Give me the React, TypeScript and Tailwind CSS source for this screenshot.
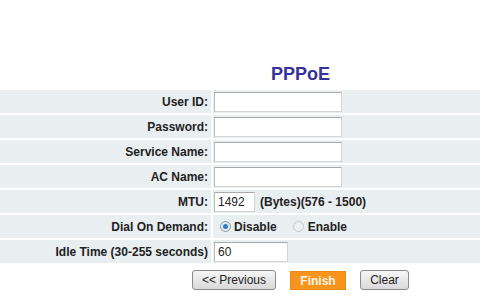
import React from "react";

const font = { fontFamily: '"Liberation Sans", Arial, sans-serif' };

function Row({ label, children }: { label: string; children?: React.ReactNode }) {
  return (
    <div className="flex h-[23px] gap-[2px]">
      <div className="w-[211px] bg-[#e9eef1] flex items-center justify-end pr-[3px] text-[12px] font-bold text-[#222]">
        {label}
      </div>
      <div className="flex-1 bg-[#e9eef1] flex items-center pl-[1px] text-[12px] text-[#222]">
        {children}
      </div>
    </div>
  );
}

function TextInput({ w, value = "" }: { w: string; value?: string }) {
  return (
    <div
      className={`${w} h-[20px] bg-white border border-[#d4d4d4] border-t-[#a9a9a9] border-l-[#bcbcbc] flex items-center pl-[3px] text-[12px] text-[#222]`}
    >
      {value}
    </div>
  );
}

function Radio({ checked }: { checked: boolean }) {
  return checked ? (
    <span className="w-[11px] h-[11px] rounded-full border border-[#8a9aa6] bg-[#e4eaee] flex items-center justify-center">
      <span className="w-[5px] h-[5px] rounded-full bg-[#2f7fc1]" />
    </span>
  ) : (
    <span className="w-[11px] h-[11px] rounded-full border border-[#c2c8cc] bg-[#eef0f1]" />
  );
}

export default function App() {
  return (
    <div className="w-[500px] h-[305px] overflow-hidden bg-white" style={font}>
      <div className="w-[601px] pt-[62px] h-[86px] flex justify-center">
        <div className="text-[18px] leading-[24px] font-bold text-[#333399]">PPPoE</div>
      </div>
      <div className="w-[480px] mt-[4px] flex flex-col gap-[2px]">
        <Row label="User ID:">
          <TextInput w="w-[128px]" />
        </Row>
        <Row label="Password:">
          <TextInput w="w-[128px]" />
        </Row>
        <Row label="Service Name:">
          <TextInput w="w-[128px]" />
        </Row>
        <Row label="AC Name:">
          <TextInput w="w-[128px]" />
        </Row>
        <Row label="MTU:">
          <TextInput w="w-[41px]" value="1492" />
          <span className="ml-[5px] font-bold">(Bytes)(576 - 1500)</span>
        </Row>
        <Row label="Dial On Demand:">
          <span className="ml-[6px] flex items-center">
            <Radio checked />
            <span className="ml-[3px] font-bold">Disable</span>
          </span>
          <span className="ml-[16px] flex items-center">
            <Radio checked={false} />
            <span className="ml-[4px] font-bold">Enable</span>
          </span>
        </Row>
        <Row label="Idle Time (30-255 seconds)">
          <TextInput w="w-[74px]" value="60" />
        </Row>
      </div>
      <div className="w-[601px] mt-[7px] flex justify-center gap-[14px]">
        <button className="w-[84px] h-[20px] rounded-[3px] border border-[#8c8c8c] bg-gradient-to-b from-[#f6f6f6] to-[#d9d9d9] text-[12px] text-[#222] leading-none">
          &lt;&lt; Previous
        </button>
        <button className="w-[56px] h-[19px] mt-[1px] border border-[#e88a10] bg-[#f7941d] text-[12px] font-bold text-[#fff6e6] leading-none">
          Finish
        </button>
        <button className="w-[49px] h-[20px] rounded-[3px] border border-[#8c8c8c] bg-gradient-to-b from-[#f6f6f6] to-[#d9d9d9] text-[12px] text-[#222] leading-none">
          Clear
        </button>
      </div>
    </div>
  );
}
